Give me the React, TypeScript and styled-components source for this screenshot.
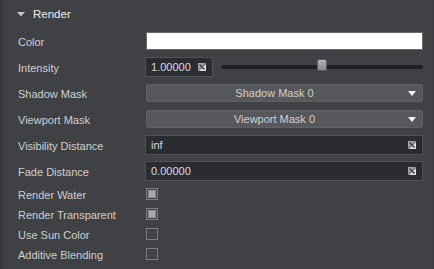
import React from "react";
import styled, { createGlobalStyle } from "styled-components";

const Global = createGlobalStyle`
  html, body { margin: 0; padding: 0; background: #404145; }
  body { font-family: "Liberation Sans", Arial, sans-serif; font-size: 11px; }
`;

const Panel = styled.div`
  width: 434px;
  height: 269px;
  box-sizing: border-box;
  background: #404145;
  border-left: 3px solid #36373b;
  border-right: 1px solid #36373b;
  display: flex;
  flex-direction: column;
  overflow: hidden;
`;

const Header = styled.div`
  height: 28px;
  display: flex;
  align-items: center;
  padding-left: 14px;
  gap: 8px;
  color: #ececec;
  font-size: 11.5px;
`;

const Row = styled.div<{ $h: number }>`
  height: ${(p) => p.$h}px;
  display: grid;
  grid-template-columns: 127px 1fr;
  align-items: center;
  padding: 0 10px 0 15px;
`;

const Label = styled.div`
  color: #cfcfcf;
  white-space: nowrap;
  padding-top: 1px;
`;

const ColorField = styled.div`
  margin-left: 1px;
  height: 18px;
  box-sizing: border-box;
  background: #ffffff;
  border: 1px solid #6a6b6f;
`;

const Input = styled.div<{ $w?: number }>`
  ${(p) => (p.$w ? `width: ${p.$w}px;` : "")}
  height: 20px;
  box-sizing: border-box;
  background: #2b2c2f;
  border: 1px solid #515256;
  display: flex;
  align-items: center;
  justify-content: space-between;
  padding: 0 6px 0 5px;
  color: #d8dbe2;
`;

const Split = styled.div`
  display: flex;
  align-items: center;
  gap: 8px;
`;

const Track = styled.div`
  position: relative;
  flex: 1;
  height: 4px;
  border-radius: 2px;
  background: #1f2023;
`;

const Handle = styled.div`
  position: absolute;
  top: -6px;
  width: 10px;
  height: 12px;
  margin-left: -5px;
  box-sizing: border-box;
  border-radius: 2px;
  border: 1px solid #5c5d60;
  background: linear-gradient(#b4b4b4, #8a8a8a);
`;

const Select = styled.div`
  margin-left: 1px;
  height: 18px;
  box-sizing: border-box;
  border-radius: 2px;
  background: #57585c;
  border: 1px solid #606165;
  display: flex;
  align-items: center;
  position: relative;
  color: #cfcfcf;
`;

const SelectText = styled.div`
  flex: 1;
  text-align: center;
  padding-right: 20px;
`;

const Arrow = styled.div`
  position: absolute;
  right: 6px;
  top: 6px;
  width: 0;
  height: 0;
  border-left: 4px solid transparent;
  border-right: 4px solid transparent;
  border-top: 5px solid #f2f2f2;
`;

const Check = styled.div<{ $on?: boolean }>`
  margin-left: 1px;
  width: 12px;
  height: 12px;
  box-sizing: border-box;
  border: 1px solid #7d7e82;
  background: #414246;
  display: flex;
  align-items: center;
  justify-content: center;
  &::after {
    content: "";
    display: ${(p) => (p.$on ? "block" : "none")};
    width: 8px;
    height: 8px;
    background: #a9a9ab;
    box-sizing: border-box;
    border: 1px solid #8e8f92;
  }
`;

const DragIcon = () => (
  <svg width="8" height="8" viewBox="0 0 8 8">
    <rect x="0" y="0" width="8" height="8" fill="#8a8b8e" />
    <polygon points="0,0 6,0 0,6" fill="#a9aaac" />
    <polygon points="8,1.5 8,8 1.5,8" fill="#e2e2e4" />
    <line x1="1.5" y1="1.5" x2="6.5" y2="6.5" stroke="#2c2d30" strokeWidth="1.1" />
  </svg>
);

const HeaderArrow = () => (
  <svg width="8" height="5" viewBox="0 0 8 5">
    <polygon points="0,0 8,0 4,4.5" fill="#c9c9c9" />
  </svg>
);

export default function App() {
  return (
    <>
      <Global />
      <Panel>
        <Header>
          <HeaderArrow />
          <span>Render</span>
        </Header>
        <Row $h={26}>
          <Label>Color</Label>
          <ColorField />
        </Row>
        <Row $h={26}>
          <Label>Intensity</Label>
          <Split>
            <Input $w={68}>
              <span>1.00000</span>
              <DragIcon />
            </Input>
            <Track>
              <Handle style={{ left: "50%" }} />
            </Track>
          </Split>
        </Row>
        <Row $h={26}>
          <Label>Shadow Mask</Label>
          <Select>
            <SelectText>Shadow Mask 0</SelectText>
            <Arrow />
          </Select>
        </Row>
        <Row $h={26}>
          <Label>Viewport Mask</Label>
          <Select>
            <SelectText>Viewport Mask 0</SelectText>
            <Arrow />
          </Select>
        </Row>
        <Row $h={26}>
          <Label>Visibility Distance</Label>
          <Input>
            <span>inf</span>
            <DragIcon />
          </Input>
        </Row>
        <Row $h={26}>
          <Label>Fade Distance</Label>
          <Input>
            <span>0.00000</span>
            <DragIcon />
          </Input>
        </Row>
        <Row $h={20}>
          <Label>Render Water</Label>
          <Check $on />
        </Row>
        <Row $h={20}>
          <Label>Render Transparent</Label>
          <Check $on />
        </Row>
        <Row $h={20}>
          <Label>Use Sun Color</Label>
          <Check />
        </Row>
        <Row $h={20}>
          <Label>Additive Blending</Label>
          <Check />
        </Row>
      </Panel>
    </>
  );
}
